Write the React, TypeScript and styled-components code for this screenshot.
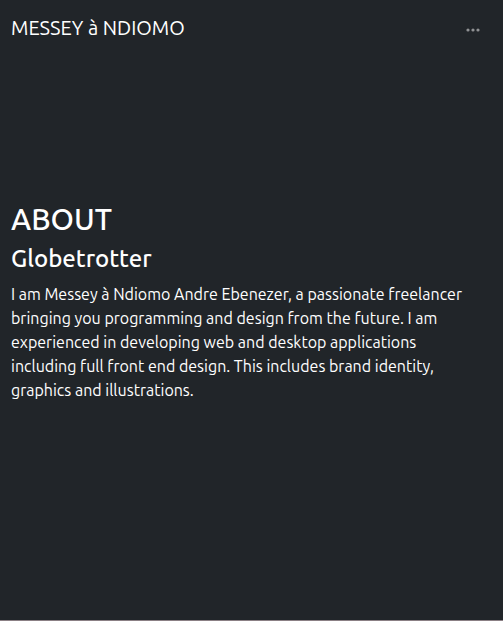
import React from "react";
import styled, { createGlobalStyle } from "styled-components";

const GlobalStyle = createGlobalStyle`
  *, *::before, *::after { box-sizing: border-box; }
  body {
    margin: 0;
    background: #212529;
    color: #fff;
    font-family: Ubuntu, "Open Sans", "Noto Sans", sans-serif;
    font-size: 16px;
    line-height: 24px;
  }
`;

const Page = styled.div`
  display: flex;
  flex-direction: column;
  min-height: 100vh;
  border-bottom: 1px solid #8b8085;
`;

const Navbar = styled.nav`
  display: flex;
  align-items: center;
  justify-content: space-between;
  padding: 8px 11px;
`;

const Brand = styled.a`
  color: #fff;
  font-size: 20px;
  line-height: 40px;
  text-decoration: none;
`;

const MenuButton = styled.button`
  display: flex;
  padding: 12px 12px 8px;
  border: 0;
  background: transparent;
  color: #909294;
  cursor: pointer;
`;

const About = styled.main`
  padding: 144px 24px 24px 11px;
`;

const Title = styled.h1`
  margin: 0 0 6px;
  font-size: 30px;
  font-weight: 500;
  line-height: 38px;
`;

const Subtitle = styled.h2`
  margin: 0 0 8px;
  font-size: 24px;
  font-weight: 500;
  line-height: 30px;
`;

const Bio = styled.p`
  margin: 0;
`;

export default function App() {
  return (
    <>
      <GlobalStyle />
      <Page>
        <Navbar>
          <Brand href="#home">MESSEY à NDIOMO</Brand>
          <MenuButton type="button" aria-label="Toggle navigation">
            <svg width="14" height="4" viewBox="0 0 14 4" fill="currentColor" aria-hidden="true">
              <circle cx="2" cy="2" r="1.6" />
              <circle cx="7" cy="2" r="1.6" />
              <circle cx="12" cy="2" r="1.6" />
            </svg>
          </MenuButton>
        </Navbar>
        <About>
          <Title>ABOUT</Title>
          <Subtitle>Globetrotter</Subtitle>
          <Bio>
            I am Messey à Ndiomo Andre Ebenezer, a passionate freelancer bringing you
            programming and design from the future. I am experienced in developing web and
            desktop applications including full front end design. This includes brand
            identity, graphics and illustrations.
          </Bio>
        </About>
      </Page>
    </>
  );
}
